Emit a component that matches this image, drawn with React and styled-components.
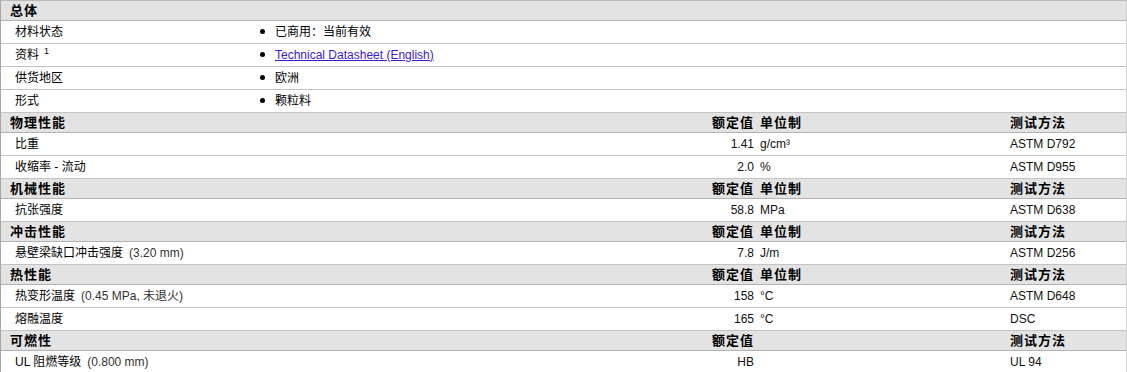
import React from 'react';
import styled, { createGlobalStyle } from 'styled-components';

const GlobalStyle = createGlobalStyle`
    body {
        margin: 0;
        background: #ffffff;
        font-family: "Liberation Sans", Arial, "Noto Sans CJK SC", sans-serif;
        color: #000000;
    }
`;

const general = [
    { label: '材料状态', value: '已商用：当前有效' },
    { label: '资料', note: '1', value: 'Technical Datasheet (English)', link: true },
    { label: '供货地区', value: '欧洲' },
    { label: '形式', value: '颗粒料' },
];

const sections = [
    {
        title: '物理性能',
        rows: [
            { label: '比重', value: '1.41', unit: 'g/cm³', method: 'ASTM D792' },
            { label: '收缩率', extra: ' - 流动', value: '2.0', unit: '%', method: 'ASTM D955' },
        ],
    },
    {
        title: '机械性能',
        rows: [{ label: '抗张强度', value: '58.8', unit: 'MPa', method: 'ASTM D638' }],
    },
    {
        title: '冲击性能',
        rows: [{ label: '悬壁梁缺口冲击强度', cond: '(3.20 mm)', value: '7.8', unit: 'J/m', method: 'ASTM D256' }],
    },
    {
        title: '热性能',
        rows: [
            { label: '热变形温度', cond: '(0.45 MPa, 未退火)', value: '158', unit: '°C', method: 'ASTM D648' },
            { label: '熔融温度', value: '165', unit: '°C', method: 'DSC' },
        ],
    },
    {
        title: '可燃性',
        noUnit: true,
        rows: [{ label: 'UL 阻燃等级', cond: '(0.800 mm)', value: 'HB', unit: '', method: 'UL 94' }],
    },
];

function App() {
    return (
        <>
            <GlobalStyle />
            <Sheet>
                <HeadRow>
                    <HeadTitle>总体</HeadTitle>
                </HeadRow>
                {general.map((item, index) => (
                    <InfoRow key={index}>
                        <Label>
                            {item.label}
                            {item.note && <Note>{item.note}</Note>}
                        </Label>
                        <Bulleted>
                            {item.link ? <DocLink href="#">{item.value}</DocLink> : item.value}
                        </Bulleted>
                    </InfoRow>
                ))}

                {sections.map((section) => (
                    <React.Fragment key={section.title}>
                        <HeadRow $grid>
                            <HeadTitle>{section.title}</HeadTitle>
                            <HeadCell $right>额定值</HeadCell>
                            <HeadCell>{section.noUnit ? '' : '单位制'}</HeadCell>
                            <HeadCell>测试方法</HeadCell>
                        </HeadRow>
                        {section.rows.map((row) => (
                            <PropRow key={row.label}>
                                <Label>
                                    {row.label}
                                    {row.extra}
                                    {row.cond && <Cond>{row.cond}</Cond>}
                                </Label>
                                <Cell $right>{row.value}</Cell>
                                <Cell>{row.unit}</Cell>
                                <Cell>{row.method}</Cell>
                            </PropRow>
                        ))}
                    </React.Fragment>
                ))}
            </Sheet>
        </>
    );
}

const Sheet = styled.div`
    width: 1127px;
    box-sizing: border-box;
    border-top: 1px solid #b9b9b9;
    border-left: 1px solid #a6a6a6;
    border-right: 1px solid #d0d0d0;
`;

const HeadRow = styled.div`
    display: ${(props) => (props.$grid ? 'grid' : 'flex')};
    grid-template-columns: 1fr 80px 250px 119px;
    align-items: center;
    height: 18px;
    padding-bottom: 1px;
    background-color: #e3e3e3;
    border-bottom: 1px solid #b3b3b3;
`;

const HeadTitle = styled.div`
    padding-left: 9px;
    font-size: 13px;
    font-weight: bold;
    letter-spacing: 1px;
    font-family: "Noto Sans CJK SC", sans-serif;
    line-height: 18px;
`;

const HeadCell = styled(HeadTitle)`
    padding: 0 3px;
    text-align: ${(props) => (props.$right ? 'right' : 'left')};
`;

const InfoRow = styled.div`
    display: grid;
    grid-template-columns: 257px 1fr;
    align-items: center;
    height: 21px;
    padding-bottom: 1px;
    border-bottom: 1px solid #c3c3c3;
    font-size: 12px;
    line-height: 16px;
`;

const PropRow = styled(InfoRow)`
    grid-template-columns: 1fr 80px 250px 119px;
`;

const Label = styled.div`
    padding-left: 14px;
    white-space: nowrap;
`;

const Note = styled.sup`
    font-size: 9px;
    margin-left: 5px;
    vertical-align: 5px;
    line-height: 0;
`;

const Cond = styled.span`
    color: #333333;
    margin-left: 6px;
`;

const Bulleted = styled.div`
    display: flex;
    align-items: center;
    white-space: nowrap;

    &::before {
        content: '';
        width: 5px;
        height: 5px;
        border-radius: 50%;
        background-color: #000000;
        margin-left: 2px;
        margin-right: 10px;
    }
`;

const DocLink = styled.a`
    color: #3b1ad6;
    text-decoration: underline;
`;

const Cell = styled.div`
    padding: 0 3px;
    white-space: nowrap;
    color: #111111;
    text-align: ${(props) => (props.$right ? 'right' : 'left')};
`;

export default App;
